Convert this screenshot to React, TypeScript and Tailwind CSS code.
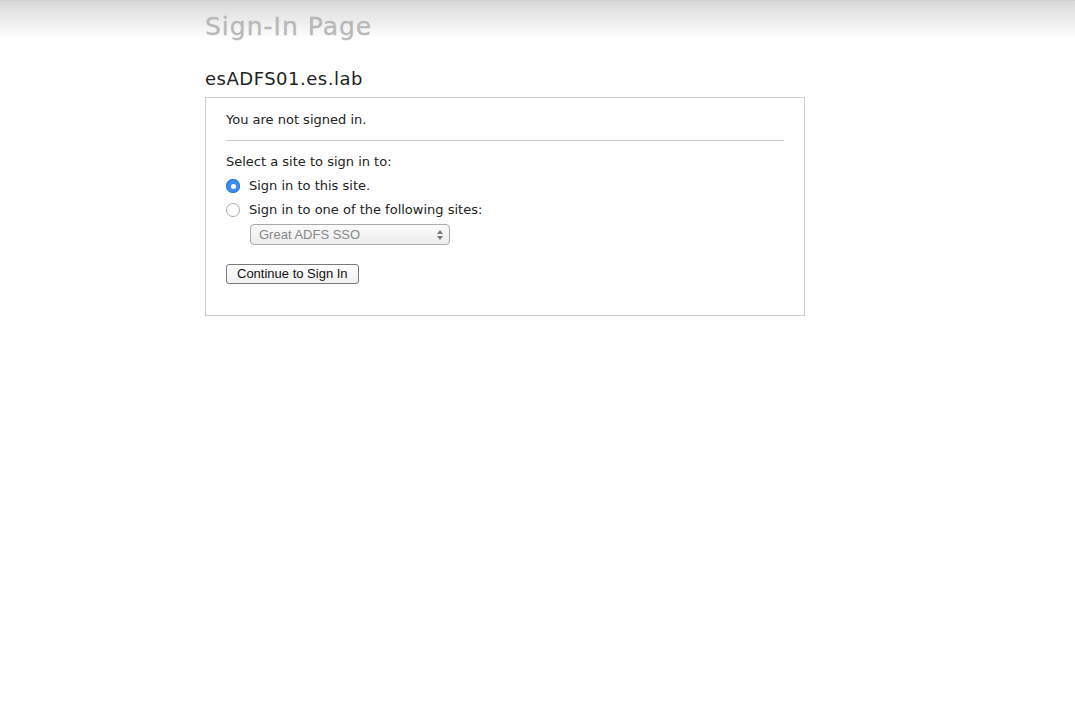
import React from "react";

function Radio({ checked }: { checked?: boolean }) {
  return checked ? (
    <span className="inline-flex h-[14px] w-[14px] items-center justify-center rounded-full bg-[#3b8ef0] shadow-[inset_0_0_0_1px_#2f7ad6]">
      <span className="h-[5px] w-[5px] rounded-full bg-white" />
    </span>
  ) : (
    <span className="inline-block h-[14px] w-[14px] rounded-full border border-[#a8a8a8] bg-white" />
  );
}

export default function App() {
  return (
    <div
      className="min-h-[711px] w-full border-t border-[#cfcfcf] bg-[linear-gradient(#d9d9d9,#ffffff_38px)] text-[#222]"
      style={{ fontFamily: '"DejaVu Sans", Verdana, sans-serif' }}
    >
      <div className="ml-[205px] w-[600px]">
        <h1 className="pt-[11px] text-[25px] leading-[30px] tracking-[1px] text-[#b8b8b8] [-webkit-text-stroke:0.3px_#b8b8b8]">Sign-In Page</h1>
        <h2 className="mt-[26px] text-[18px] leading-[22px] tracking-[0.5px] text-[#222]">esADFS01.es.lab</h2>
        <div className="mt-[7px] border border-[#cccccc] px-[20px] pt-[14px] pb-[31px] text-[13px] leading-[16px]">
          <div>You are not signed in.</div>
          <div className="mt-[12px] h-px bg-[#cccccc]" />
          <div className="mt-[13px]">Select a site to sign in to:</div>
          <div className="mt-[8px] flex items-center gap-[9px]">
            <Radio checked />
            <span>Sign in to this site.</span>
          </div>
          <div className="mt-[8px] flex items-center gap-[9px]">
            <Radio />
            <span>Sign in to one of the following sites:</span>
          </div>
          <div className="ml-[24px] mt-[6px] flex h-[21px] w-[200px] items-center justify-between rounded-[4px] border border-[#aaaaaa] bg-[linear-gradient(#fbfbfb,#ececec)] pl-[8px] pr-[6px] text-[#888]"
            style={{ fontFamily: '"Liberation Sans", Arial, sans-serif' }}>
            <span className="text-[13px]">Great ADFS SSO</span>
            <svg width="6" height="10" viewBox="0 0 6 10">
              <path d="M0 4 L3 0 L6 4 Z" fill="#777" />
              <path d="M0 6 L3 10 L6 6 Z" fill="#777" />
            </svg>
          </div>
          <button
            className="mt-[19px] h-[20px] rounded-[3px] border border-[#7a7a7a] bg-[linear-gradient(#ffffff,#f0f0f0)] px-[10px] text-[13px] leading-[18px] text-[#111]"
            style={{ fontFamily: '"Liberation Sans", Arial, sans-serif' }}
          >
            Continue to Sign In
          </button>
        </div>
      </div>
    </div>
  );
}
